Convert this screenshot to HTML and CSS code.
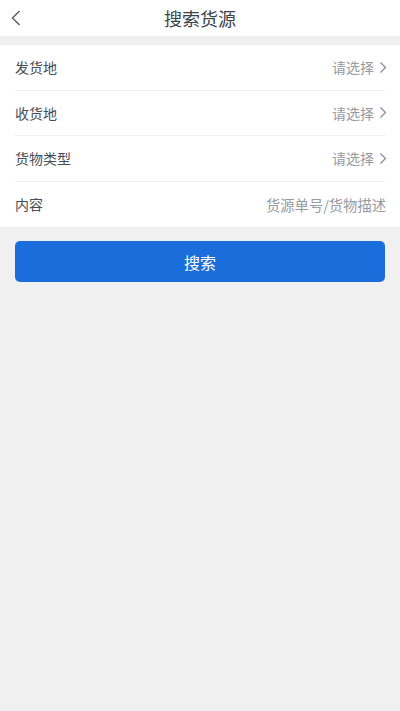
FILE: index.html
```html
<!DOCTYPE html>
<html lang="zh-CN">
<head>
  <meta charset="UTF-8">
  <title>搜索货源</title>
  <link rel="stylesheet" href="styles.css">
</head>
<body>

<header class="topbar">
  <span class="back">
    <svg width="12" height="18" viewBox="0 0 12 18"><path d="M9.5 2 L2.5 9 L9.5 16" fill="none" stroke="#555a63" stroke-width="1.4"/></svg>
  </span>
  <div class="title">搜索货源</div>
</header>

<div class="form">
  <div class="row">
    <span class="label">发货地</span>
    <span class="value">请选择<svg class="arrow" width="8" height="13" viewBox="0 0 8 13"><path d="M1.5 1.5 L6.5 6.5 L1.5 11.5" fill="none" stroke="#8a8f99" stroke-width="1.3"/></svg></span>
  </div>
  <div class="row">
    <span class="label">收货地</span>
    <span class="value">请选择<svg class="arrow" width="8" height="13" viewBox="0 0 8 13"><path d="M1.5 1.5 L6.5 6.5 L1.5 11.5" fill="none" stroke="#8a8f99" stroke-width="1.3"/></svg></span>
  </div>
  <div class="row">
    <span class="label">货物类型</span>
    <span class="value">请选择<svg class="arrow" width="8" height="13" viewBox="0 0 8 13"><path d="M1.5 1.5 L6.5 6.5 L1.5 11.5" fill="none" stroke="#8a8f99" stroke-width="1.3"/></svg></span>
  </div>
  <div class="row">
    <span class="label">内容</span>
    <input class="field" type="text" placeholder="货源单号/货物描述">
  </div>
</div>

<div class="actions">
  <button class="btn">搜索</button>
</div>

</body>
</html>
```

FILE: styles.css
```css
body {
  font-family: "Noto Sans CJK SC", "Noto Sans", sans-serif;
  margin: 0;
  background-color: #f0f0f0;
  height: 711px;
}
.topbar {
  position: relative;
  height: 36px;
  background-color: #fff;
  display: flex;
  align-items: center;
  justify-content: center;
  margin-bottom: 9px;
}
.back {
  position: absolute;
  left: 10px;
  top: 9px;
  display: flex;
}
.title {
  font-size: 18px;
  color: #3d434d;
}
.form {
  background-color: #fff;
  padding: 0 15px;
}
.row {
  height: 45.5px;
  display: flex;
  align-items: center;
  justify-content: space-between;
  border-bottom: 1px solid #efefef;
  box-sizing: border-box;
}
.row:last-child {
  border-bottom: none;
}
.label {
  font-size: 14px;
  color: #474c55;
}
.value {
  font-size: 14px;
  color: #959aa3;
  display: flex;
  align-items: center;
}
.arrow {
  margin-left: 5px;
  margin-right: -2px;
}
.field {
  border: none;
  outline: none;
  text-align: right;
  font-family: inherit;
  font-size: 14.3px;
  padding: 0;
  width: 200px;
  margin-right: -1px;
}
.field::placeholder {
  color: #959aa3;
}
.actions {
  padding: 14px 15px;
}
.btn {
  width: 100%;
  height: 41px;
  border: none;
  border-radius: 5px;
  background-color: #1b6ddb;
  color: #fff;
  font-family: inherit;
  font-size: 16px;
}
```
